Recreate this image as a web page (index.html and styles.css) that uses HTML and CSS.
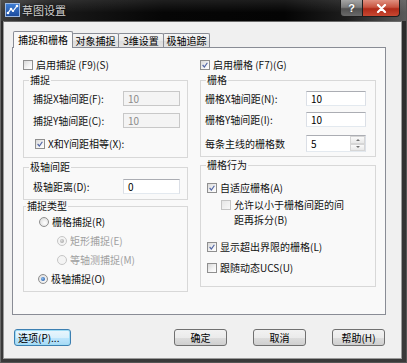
FILE: index.html
```html
<!DOCTYPE html>
<html>
<head>
<meta charset="utf-8">
<link rel="stylesheet" href="styles.css">
</head>
<body>
<div class="window">
  <div class="titlebar">
    <span class="appicon">
      <svg width="15" height="14" viewBox="0 0 15 14">
        <defs>
          <linearGradient id="ig" x1="0" y1="0" x2="0" y2="1">
            <stop offset="0" stop-color="#3f7fd6"/>
            <stop offset="1" stop-color="#1b4a9c"/>
          </linearGradient>
        </defs>
        <rect x="0.5" y="0.5" width="14" height="13" fill="url(#ig)" stroke="#9cb8e0"/>
        <path d="M3 10 L6 6 L8 8 L12 3" stroke="#ffffff" stroke-width="1.2" fill="none"/>
        <circle cx="3" cy="10" r="1.3" fill="#fff"/>
        <circle cx="6" cy="6" r="1.3" fill="#fff"/>
        <circle cx="8" cy="8" r="1.1" fill="#fff"/>
        <circle cx="12" cy="3" r="1.3" fill="#fff"/>
      </svg>
    </span>
    <span class="title">草图设置</span>
    <span class="spacer"></span>
    <span class="tbtn help">?</span>
    <span class="tbtn close">
      <svg width="11" height="9" viewBox="0 0 11 9"><path d="M2 1 L9 8 M9 1 L2 8" stroke="#fff" stroke-width="2.2" stroke-linecap="round"/></svg>
    </span>
  </div>
  <div class="client">
    <div class="tabs">
      <div class="tab active t1">捕捉和栅格</div>
      <div class="tab t2">对象捕捉</div>
      <div class="tab t3">3维设置</div>
      <div class="tab t4">极轴追踪</div>
    </div>
    <div class="panel">
      <div class="col left">
        <div class="chkrow"><span class="cb"></span><span class="lbl">启用捕捉 (F9)(S)</span></div>
        <div class="group g-snap">
          <div class="legend">捕捉</div>
          <div class="frow"><span class="flabel">捕捉X轴间距(F):</span><span class="input disabled">10</span></div>
          <div class="frow r2"><span class="flabel">捕捉Y轴间距(C):</span><span class="input disabled">10</span></div>
          <div class="chkrow eq"><span class="cb"><svg viewBox="0 0 10 10"><path d="M2 5 L4.2 7.5 L8 2.2" stroke="#5468a6" stroke-width="1.5" fill="none"/></svg></span><span class="lbl">X和Y间距相等(X):</span></div>
        </div>
        <div class="group g-polar">
          <div class="legend">极轴间距</div>
          <div class="frow"><span class="flabel">极轴距离(D):</span><span class="input">0</span></div>
        </div>
        <div class="group g-type">
          <div class="legend">捕捉类型</div>
          <div class="rrow r-grid"><span class="rb"></span><span class="lbl">栅格捕捉(R)</span></div>
          <div class="rrow sub dis"><span class="rb on dis"></span><span class="lbl">矩形捕捉(E)</span></div>
          <div class="rrow sub dis"><span class="rb dis"></span><span class="lbl">等轴测捕捉(M)</span></div>
          <div class="rrow"><span class="rb on"></span><span class="lbl">极轴捕捉(O)</span></div>
        </div>
      </div>
      <div class="col right">
        <div class="chkrow"><span class="cb"><svg viewBox="0 0 10 10"><path d="M2 5 L4.2 7.5 L8 2.2" stroke="#5468a6" stroke-width="1.5" fill="none"/></svg></span><span class="lbl">启用栅格 (F7)(G)</span></div>
        <div class="group g-grid">
          <div class="legend">栅格</div>
          <div class="frow"><span class="flabel">栅格X轴间距(N):</span><span class="input">10</span></div>
          <div class="frow r2"><span class="flabel">栅格Y轴间距(I):</span><span class="input">10</span></div>
          <div class="frow r3"><span class="flabel">每条主线的栅格数</span><span class="input spin"><span class="val">5</span><span class="spinbtns"><span class="sb up"></span><span class="sb down"></span></span></span></div>
        </div>
        <div class="group g-beh">
          <div class="legend">栅格行为</div>
          <div class="chkrow a1"><span class="cb"><svg viewBox="0 0 10 10"><path d="M2 5 L4.2 7.5 L8 2.2" stroke="#5468a6" stroke-width="1.5" fill="none"/></svg></span><span class="lbl">自适应栅格(A)</span></div>
          <div class="chkrow a2"><span class="cb dis"></span><span class="lbl two"><span class="ln">允许以小于栅格间距的间</span><span class="ln">距再拆分(B)</span></span></div>
          <div class="chkrow a3"><span class="cb"><svg viewBox="0 0 10 10"><path d="M2 5 L4.2 7.5 L8 2.2" stroke="#5468a6" stroke-width="1.5" fill="none"/></svg></span><span class="lbl">显示超出界限的栅格(L)</span></div>
          <div class="chkrow a4"><span class="cb"></span><span class="lbl">跟随动态UCS(U)</span></div>
        </div>
      </div>
    </div>
    <div class="buttons">
      <span class="btn opt">选项(P)...</span>
      <span class="btn ok">确定</span>
      <span class="btn">取消</span>
      <span class="btn">帮助(H)</span>
    </div>
  </div>
</div>
</body>
</html>
```
FILE: styles.css
```css
html, body {
  margin: 0;
  padding: 0;
  background: #2e2e2e;
}
body {
  font-family: "Noto Sans CJK SC", "Liberation Sans", sans-serif;
  font-size: 10px;
  line-height: 12px;
  color: #111;
}
.window {
  width: 407px;
  height: 363px;
  display: flex;
  flex-direction: column;
  background: linear-gradient(180deg, #2a2a2a 0%, #3a3a3a 100%);
  box-sizing: border-box;
  border-left: 1px solid #6a6a6a;
  border-right: 1px solid #555;
  border-bottom: 1px solid #555;
}
.titlebar {
  height: 21px;
  flex: none;
  display: flex;
  align-items: flex-start;
  background:
    linear-gradient(180deg, rgba(255,255,255,0.10) 0%, rgba(255,255,255,0) 60%),
    linear-gradient(90deg, #3c3c3c 0%, #1a1a1a 12%, #060606 40%, #040404 70%, #1c1c1c 85%, #5a5a5a 100%);
}
.appicon {
  margin: 3px 0 0 4px;
  width: 15px;
  height: 14px;
}
.appicon svg { display: block; }
.title {
  margin: 3px 0 0 2px;
  font-size: 11px;
  line-height: 14px;
  color: #d0d0d0;
  text-shadow: 0 0 3px #000;
}
.spacer { flex: 1; }
.tbtn {
  height: 17px;
  box-sizing: border-box;
  display: flex;
  align-items: center;
  justify-content: center;
  border: 1px solid #1e1e1e;
  border-top: none;
}
.help {
  width: 23px;
  border-radius: 0 0 0 4px;
  background: linear-gradient(180deg, #a4a4a4 0%, #7c7c7c 45%, #505050 55%, #6a6a6a 100%);
  color: #fff;
  font-family: "Liberation Sans", sans-serif;
  font-weight: bold;
  font-size: 11px;
  text-shadow: 0 0 2px #333;
}
.close {
  width: 37px;
  margin-right: 6px;
  border-left: none;
  border-radius: 0 0 4px 0;
  background: linear-gradient(180deg, #e09080 0%, #c85440 45%, #b02a18 55%, #c84832 100%);
}
.close svg { display: block; }
.client {
  flex: 1;
  margin: 0 4px 3px 2px;
  background: #f0f0f0;
  border: 1px solid #9a9a9a;
  border-top-color: #6a6a6a;
  box-sizing: border-box;
  display: flex;
  flex-direction: column;
}
.tabs {
  display: flex;
  align-items: flex-end;
  margin: 9px 0 0 9px;
  height: 16px;
}
.tab {
  box-sizing: border-box;
  height: 14px;
  border: 1px solid #898c95;
  border-bottom: none;
  background: linear-gradient(180deg, #f6f6f6 0%, #e8e8e8 50%, #dcdcdc 51%, #e4e4e4 100%);
  text-align: center;
  line-height: 13px;
  color: #000;
  margin-left: -1px;
  border-radius: 2px 2px 0 0;
}
.tab.active {
  height: 17px;
  margin-bottom: -1px;
  margin-left: 0;
  background: #f9f9f9;
  position: relative;
  z-index: 1;
  line-height: 16px;
}
.t1 { width: 60px; }
.t2 { width: 47px; }
.t3 { width: 46px; }
.t4 { width: 47px; }
.panel {
  margin-left: 8px;
  width: 374px;
  height: 268px;
  box-sizing: border-box;
  border: 1px solid #898c95;
  background: #f9f9f9;
  display: flex;
  padding: 11px 0 0 10px;
  gap: 12px;
}
.col { display: flex; flex-direction: column; }
.col.left { width: 165px; }
.col.right { width: 176px; }
.chkrow {
  display: flex;
  align-items: center;
  height: 12px;
}
.cb {
  width: 10px;
  height: 10px;
  box-sizing: border-box;
  border: 1px solid #8f8f8f;
  background: linear-gradient(135deg, #d8d8d8 0%, #f4f4f4 60%, #ffffff 100%);
  flex: none;
  margin-right: 3px;
}
.cb svg { display: block; width: 8px; height: 8px; }
.cb.dis {
  border-color: #c4c4c4;
  background: linear-gradient(135deg, #e6e6e6 0%, #f8f8f8 100%);
}
.lbl { white-space: nowrap; }
.group {
  border: 1px solid #d8d8d8;
  box-sizing: border-box;
  display: flex;
  flex-direction: column;
}
.legend {
  margin: -7px 0 0 5px;
  padding: 0 1px;
  background: #f9f9f9;
  align-self: flex-start;
  height: 12px;
  line-height: 12px;
}
.frow {
  display: flex;
  align-items: center;
  height: 15px;
}
.flabel { white-space: nowrap; }
.input {
  box-sizing: border-box;
  height: 15px;
  border: 1px solid #abadb3;
  border-color: #abadb3 #dbdfe6 #e3e9ef #dbdfe6;
  background: #fff;
  padding-left: 4px;
  line-height: 13px;
  color: #000;
  display: flex;
  align-items: center;
}
.input.disabled {
  background: #f4f4f4;
  border-color: #c8c8c8;
  color: #8c8c8c;
}
/* left groups */
.g-snap { margin-top: 9px; padding-bottom: 7px; }
.g-snap .legend { margin-bottom: 5px; }
.g-snap .frow, .g-polar .frow { padding-left: 9px; }
.g-snap .flabel, .g-polar .flabel { width: 90px; }
.g-snap .input, .g-polar .input { width: 57px; }
.g-snap .r2 { margin-top: 7px; }
.g-snap .eq { margin-top: 10px; padding-left: 11px; }
.g-polar { margin-top: 9px; padding-bottom: 5px; }
.g-polar .legend { margin-bottom: 6px; }
.g-type { margin-top: 6px; padding-bottom: 6px; }
.g-type .legend { margin-bottom: 2px; margin-left: 2px; }
.rrow {
  display: flex;
  align-items: center;
  height: 12px;
  margin-top: 7px;
  padding-left: 14px;
}
.rrow.r-grid { margin-top: 2px; padding-left: 15px; }
.rrow.sub { padding-left: 33px; }
.rrow.dis .lbl { color: #a0a0a0; }
.rb {
  width: 10px;
  height: 10px;
  box-sizing: border-box;
  border-radius: 50%;
  border: 1px solid #8f8f8f;
  background: radial-gradient(circle at 60% 60%, #ffffff 0%, #e6e6e6 60%, #d0d0d0 100%);
  margin-right: 3px;
  flex: none;
  display: flex;
  align-items: center;
  justify-content: center;
}
.rb.dis { border-color: #c6c6c6; background: #f4f4f4; }
.rb.on::after {
  content: "";
  width: 4px;
  height: 4px;
  border-radius: 50%;
  background: radial-gradient(circle at 40% 40%, #8fc0f0 0%, #2d64b0 70%, #1b4a8c 100%);
}
.rb.on.dis::after {
  background: radial-gradient(circle at 40% 40%, #dcdcdc 0%, #a8a8a8 80%);
}
/* right groups */
.g-grid { margin-top: 9px; padding-bottom: 4px; }
.g-grid .legend { margin-bottom: 5px; }
.g-grid .frow { padding-left: 4px; }
.g-grid .flabel { width: 101px; }
.g-grid .input { width: 60px; }
.g-grid .r2 { margin-top: 6px; }
.g-grid .r3 { margin-top: 8px; height: 17px; }
.input.spin { height: 17px; padding-right: 0; justify-content: space-between; }
.spinbtns {
  width: 15px;
  height: 15px;
  display: flex;
  flex-direction: column;
}
.sb {
  flex: 1;
  box-sizing: border-box;
  border: 1px solid #d6d6d6;
  background: linear-gradient(180deg, #fafafa 0%, #e8e8e8 100%);
  display: flex;
  align-items: center;
  justify-content: center;
}
.sb.up::after {
  content: "";
  border-left: 2px solid transparent;
  border-right: 2px solid transparent;
  border-bottom: 2px solid #707070;
}
.sb.down::after {
  content: "";
  border-left: 2px solid transparent;
  border-right: 2px solid transparent;
  border-top: 2px solid #707070;
}
.g-beh { margin-top: 8px; padding-bottom: 12px; }
.g-beh .legend { margin-bottom: 11px; }
.g-beh .chkrow { padding-left: 6px; }
.g-beh .a2 {
  margin-top: 3px;
  padding-left: 20px;
  height: 30px;
  align-items: flex-start;
}
.g-beh .a2 .cb { margin-top: 3px; }
.lbl.two { display: flex; flex-direction: column; line-height: 15px; }
.lbl.two .ln { display: block; height: 15px; }
.g-beh .a3 { margin-top: 14px; }
.g-beh .a4 { margin-top: 9px; }
/* buttons */
.buttons {
  display: flex;
  margin-top: 14px;
  padding: 0 16px 0 10px;
  gap: 26px;
}
.btn {
  box-sizing: border-box;
  height: 17px;
  width: 53px;
  border: 1px solid #707070;
  border-radius: 3px;
  background: linear-gradient(180deg, #f2f2f2 0%, #ebebeb 50%, #dddddd 51%, #cfcfcf 100%);
  display: flex;
  align-items: center;
  justify-content: center;
  color: #000;
}
.btn.opt {
  width: 57px;
  justify-content: flex-start;
  padding-left: 3px;
  border-color: #3c7fb1;
  box-shadow: inset 0 0 0 1px #9fdcf5;
  background: linear-gradient(180deg, #eaf6fd 0%, #d9f0fc 50%, #bee6fd 51%, #a7d9f5 100%);
}
.btn.ok { margin-left: auto; }
```
